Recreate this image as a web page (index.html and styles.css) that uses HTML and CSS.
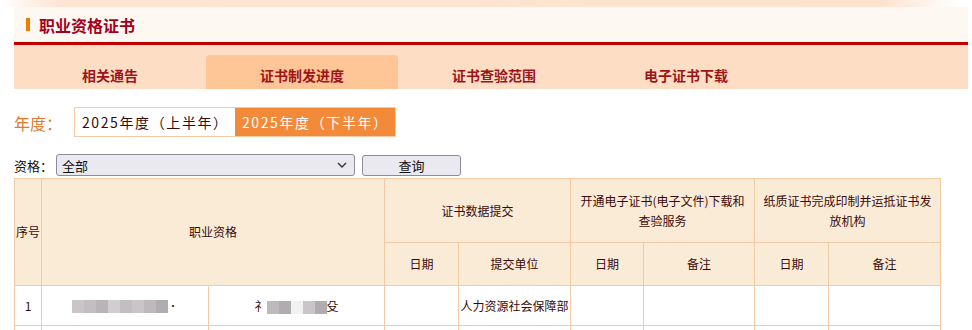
FILE: index.html
```html
<!DOCTYPE html>
<html lang="zh-CN">
<head>
    <meta charset="UTF-8">
    <title>职业资格证书</title>
    <link rel="stylesheet" href="styles.css">
</head>
<body>
    <div class="top-strip"></div>
    <div class="page">
        <div class="panel-head">
            <span class="bar"></span>
            <h1>职业资格证书</h1>
        </div>
        <nav class="tabs">
            <a href="#">相关通告</a>
            <a href="#" class="active">证书制发进度</a>
            <a href="#">证书查验范围</a>
            <a href="#">电子证书下载</a>
        </nav>

        <div class="year-row">
            <span class="year-label">年度：</span>
            <div class="year-switch">
                <span class="year-item">2025年度（上半年）</span>
                <span class="year-item current">2025年度（下半年）</span>
            </div>
        </div>

        <div class="filter-row">
            <label for="qual">资格：</label>
            <div class="select-box">
                <span>全部</span>
                <svg width="10" height="6" viewBox="0 0 10 6"><path d="M1 1l4 4 4-4" fill="none" stroke="#333" stroke-width="1.4"/></svg>
            </div>
            <button class="query-btn">查询</button>
        </div>

        <table class="progress">
            <colgroup>
                <col style="width:27px">
                <col style="width:167px">
                <col style="width:176px">
                <col style="width:74px">
                <col style="width:112px">
                <col style="width:73px">
                <col style="width:111px">
                <col style="width:74px">
                <col style="width:112px">
            </colgroup>
            <thead>
                <tr class="head-1">
                    <th rowspan="2" class="no">序号</th>
                    <th rowspan="2" colspan="2">职业资格</th>
                    <th colspan="2">证书数据提交</th>
                    <th colspan="2">开通电子证书(电子文件)下载和查验服务</th>
                    <th colspan="2">纸质证书完成印制并运抵证书发放机构</th>
                </tr>
                <tr class="head-2">
                    <th>日期</th>
                    <th>提交单位</th>
                    <th>日期</th>
                    <th>备注</th>
                    <th>日期</th>
                    <th>备注</th>
                </tr>
            </thead>
            <tbody>
                <tr>
                    <td>1</td>
                    <td><span class="blur"><i class="g1"></i><i class="g2"></i><i class="g3"></i><i class="g4"></i><i class="g2"></i><i class="g1"></i><i class="g5"></i><i class="g6"></i></span><span class="dot">·</span></td>
                    <td>礻<span class="blur"><i class="g5"></i><i class="g6"></i><i class="g7"></i><i class="g1"></i><i class="g6"></i></span>殳</td>
                    <td></td>
                    <td class="unit">人力资源社会保障部</td>
                    <td></td>
                    <td></td>
                    <td></td>
                    <td></td>
                </tr>
                <tr>
                    <td></td>
                    <td></td>
                    <td></td>
                    <td></td>
                    <td></td>
                    <td></td>
                    <td></td>
                    <td></td>
                    <td></td>
                </tr>
            </tbody>
        </table>
    </div>
</body>
</html>
```

FILE: styles.css
```css
body {
    margin: 0;
    padding: 0;
    background: #fff;
    font-family: "Noto Sans CJK SC", "Noto Sans", sans-serif;
    color: #3a0a0a;
}
.top-strip {
    height: 7px;
    background: linear-gradient(to right, #fff 0px, #fde4d3 60px, #fde2cf 880px, #fff 960px);
}
.page {
    padding: 0 4px 0 14px;
}
.panel-head {
    height: 35px;
    background: #fef8f3;
    border-bottom: 3px solid #c00000;
    display: flex;
    align-items: center;
}
.panel-head .bar {
    width: 4px;
    height: 13px;
    background: #f37a00;
    margin-left: 12px;
    margin-right: 9px;
}
.panel-head h1 {
    margin: 0;
    font-size: 16px;
    font-weight: bold;
    color: #a3001c;
    line-height: 20px;
}
.tabs {
    height: 44px;
    background: #fddec5;
    display: flex;
    align-items: flex-end;
}
.tabs a {
    width: 192px;
    height: 34px;
    line-height: 40px;
    text-align: center;
    font-size: 14px;
    font-weight: bold;
    color: #9e1419;
    text-decoration: none;
    border-radius: 4px 4px 0 0;
}
.tabs a.active {
    background: #fec597;
}
.year-row {
    display: flex;
    align-items: center;
    margin-top: 18px;
    height: 30px;
}
.year-label {
    width: 60px;
    font-size: 16px;
    color: #e07b2f;
    padding-top: 2px;
}
.year-switch {
    display: flex;
    border: 1px solid #f6c9a2;
}
.year-item {
    width: 160px;
    height: 28px;
    line-height: 28px;
    box-sizing: border-box;
    padding-left: 7px;
    font-size: 14px;
    letter-spacing: 1.6px;
    color: #3a0a0a;
    background: #fff;
}
.year-item.current {
    background: #f28a3a;
    color: #fff;
}
.filter-row {
    display: flex;
    align-items: center;
    margin-top: 17px;
    height: 22px;
    font-size: 13px;
    color: #111;
}
.filter-row label {
    width: 42px;
}
.select-box {
    width: 299px;
    height: 22px;
    box-sizing: border-box;
    background: #e9e9ef;
    border: 1px solid #8b8b99;
    border-radius: 3px;
    display: flex;
    align-items: center;
    justify-content: space-between;
    padding: 0 7px 0 5px;
}
.query-btn {
    margin-left: 7px;
    width: 99px;
    height: 21px;
    background: #e9e9ef;
    border: 1px solid #8b8b99;
    border-radius: 3px;
    font-family: inherit;
    font-size: 13px;
    color: #111;
    padding: 0;
}
.progress {
    margin-top: 2px;
    width: 926px;
    border-collapse: collapse;
    table-layout: fixed;
    font-size: 12px;
}
.progress th, .progress td {
    border: 1px solid #efcba7;
    text-align: center;
    padding: 0 2px;
    line-height: 20px;
    font-weight: normal;
    color: #3a0a0a;
}
.progress th {
    background: #faebd7;
}
.progress .head-1 th {
    height: 63px;
    padding: 0 6px;
}
.progress .head-1 th.no {
    padding: 0;
    white-space: nowrap;
}
.progress .head-2 th {
    height: 42px;
}
.progress td {
    height: 39px;
    background: #fff;
}
.progress td.unit {
    padding: 0;
    white-space: nowrap;
}
.blur {
    display: inline-flex;
    vertical-align: middle;
}
.blur i {
    width: 12px;
    height: 13px;
}
.dot {
    font-size: 10px;
}
.g1 { background: #c9c5c9; }
.g2 { background: #c2bec2; }
.g3 { background: #b8b4b8; }
.g4 { background: #d1ced1; }
.g5 { background: #bdb9bd; }
.g6 { background: #b0acb0; }
.g7 { background: #f3f2f3; }
```
